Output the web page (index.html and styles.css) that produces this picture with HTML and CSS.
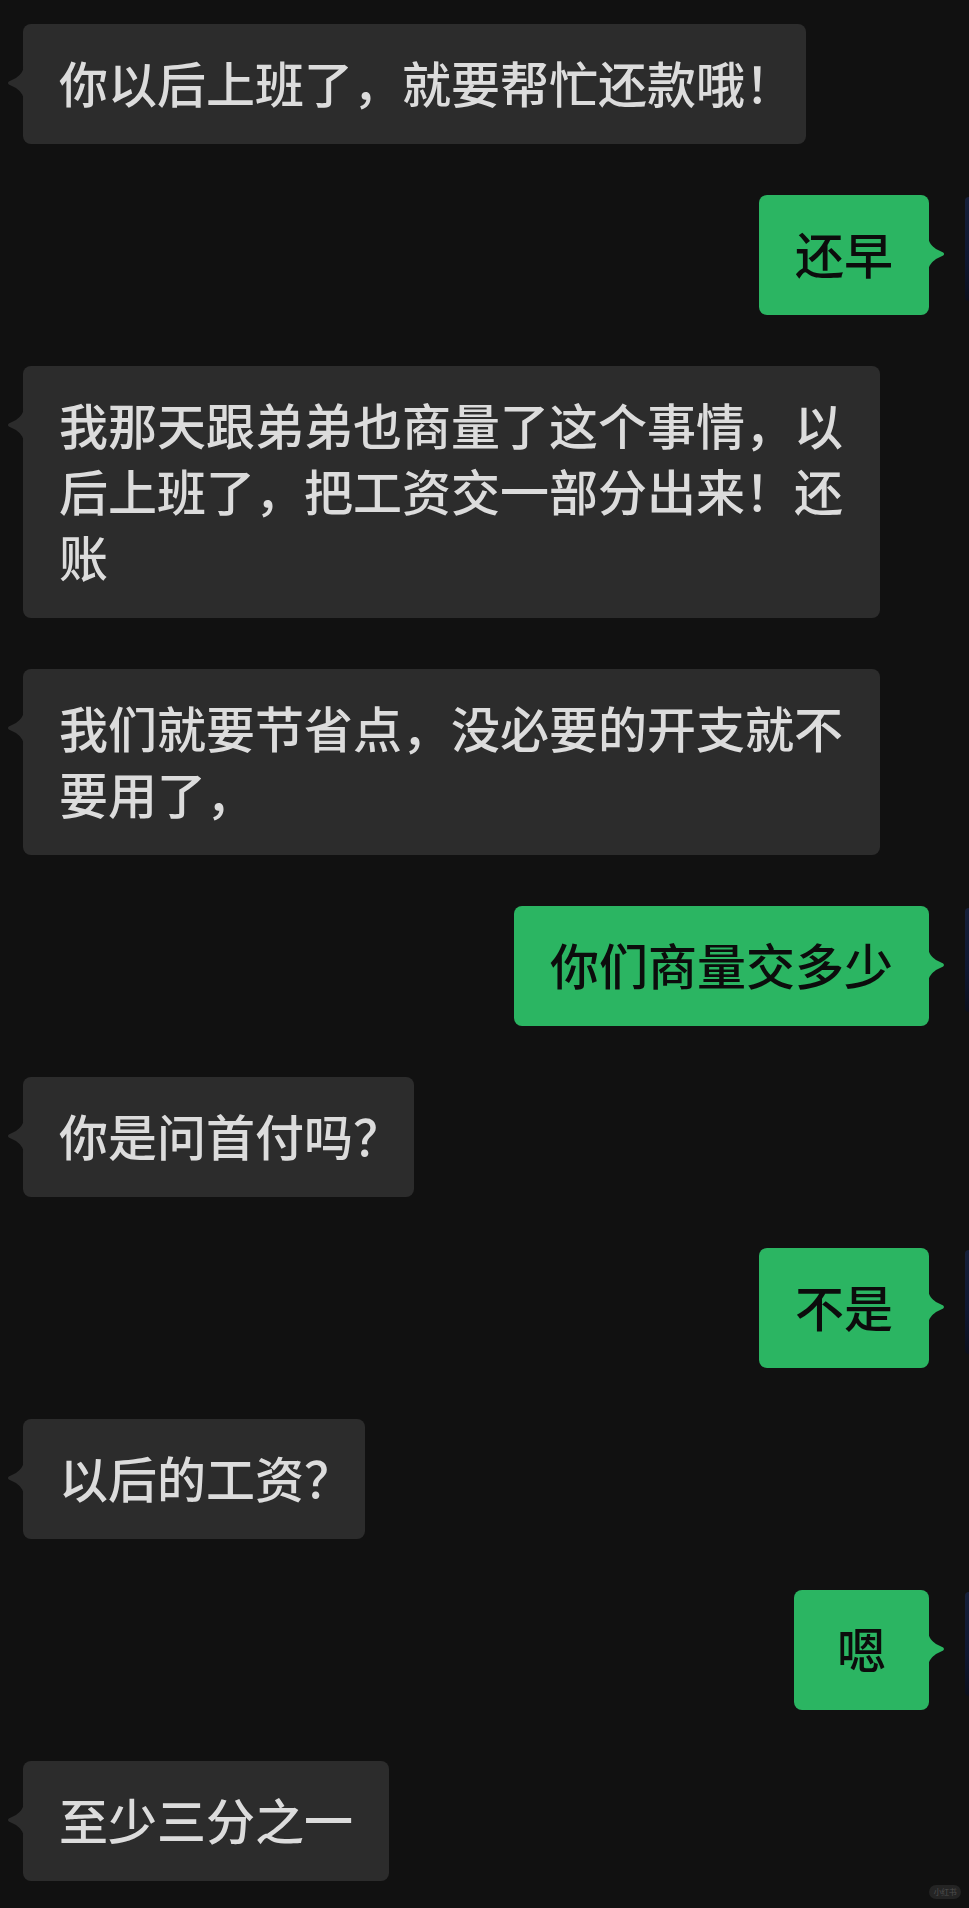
FILE: index.html
```html
<!DOCTYPE html>
<html lang="zh-CN">
<head>
<meta charset="utf-8">
<title>聊天记录</title>
<link rel="stylesheet" href="styles.css">
</head>
<body>
<main class="chat">
  <div class="row left">
    <div class="bubble dark">
      <svg class="tail tail-l" viewBox="0 0 17 34" width="17" height="34"><path d="M17 0 C16 6 13 9 9 12 L1.8 15.6 Q0 17 1.8 18.4 L9 22 C13 25 16 28 17 34 Z"/></svg>
      你以后上班了，就要帮忙还款哦<span class="half">！</span>
    </div>
  </div>
  <div class="row right">
    <div class="bubble green">
      <svg class="tail tail-r" viewBox="0 0 17 34" width="17" height="34"><path d="M0 0 C1 6 4 9 8 12 L15.2 15.6 Q17 17 15.2 18.4 L8 22 C4 25 1 28 0 34 Z"/></svg>
      还早
    </div>
    <div class="avatar"></div>
  </div>
  <div class="row left">
    <div class="bubble dark">
      <svg class="tail tail-l" viewBox="0 0 17 34" width="17" height="34"><path d="M17 0 C16 6 13 9 9 12 L1.8 15.6 Q0 17 1.8 18.4 L9 22 C13 25 16 28 17 34 Z"/></svg>
      我那天跟弟弟也商量了这个事情，以后上班了，把工资交一部分出来！还账
    </div>
  </div>
  <div class="row left">
    <div class="bubble dark">
      <svg class="tail tail-l" viewBox="0 0 17 34" width="17" height="34"><path d="M17 0 C16 6 13 9 9 12 L1.8 15.6 Q0 17 1.8 18.4 L9 22 C13 25 16 28 17 34 Z"/></svg>
      我们就要节省点，没必要的开支就不要用了，
    </div>
  </div>
  <div class="row right">
    <div class="bubble green">
      <svg class="tail tail-r" viewBox="0 0 17 34" width="17" height="34"><path d="M0 0 C1 6 4 9 8 12 L15.2 15.6 Q17 17 15.2 18.4 L8 22 C4 25 1 28 0 34 Z"/></svg>
      你们商量交多少
    </div>
    <div class="avatar"></div>
  </div>
  <div class="row left">
    <div class="bubble dark">
      <svg class="tail tail-l" viewBox="0 0 17 34" width="17" height="34"><path d="M17 0 C16 6 13 9 9 12 L1.8 15.6 Q0 17 1.8 18.4 L9 22 C13 25 16 28 17 34 Z"/></svg>
      你是问首付吗<span class="half">？</span>
    </div>
  </div>
  <div class="row right">
    <div class="bubble green">
      <svg class="tail tail-r" viewBox="0 0 17 34" width="17" height="34"><path d="M0 0 C1 6 4 9 8 12 L15.2 15.6 Q17 17 15.2 18.4 L8 22 C4 25 1 28 0 34 Z"/></svg>
      不是
    </div>
    <div class="avatar"></div>
  </div>
  <div class="row left">
    <div class="bubble dark">
      <svg class="tail tail-l" viewBox="0 0 17 34" width="17" height="34"><path d="M17 0 C16 6 13 9 9 12 L1.8 15.6 Q0 17 1.8 18.4 L9 22 C13 25 16 28 17 34 Z"/></svg>
      以后的工资<span class="half">？</span>
    </div>
  </div>
  <div class="row right">
    <div class="bubble green">
      <svg class="tail tail-r" viewBox="0 0 17 34" width="17" height="34"><path d="M0 0 C1 6 4 9 8 12 L15.2 15.6 Q17 17 15.2 18.4 L8 22 C4 25 1 28 0 34 Z"/></svg>
      嗯
    </div>
    <div class="avatar"></div>
  </div>
  <div class="row left">
    <div class="bubble dark">
      <svg class="tail tail-l" viewBox="0 0 17 34" width="17" height="34"><path d="M17 0 C16 6 13 9 9 12 L1.8 15.6 Q0 17 1.8 18.4 L9 22 C13 25 16 28 17 34 Z"/></svg>
      至少三分之一
    </div>
  </div>
</main>
<div class="watermark">小红书</div>
</body>
</html>
```

FILE: styles.css
```css
html, body {
  margin: 0;
  padding: 0;
  background: #111111;
  overflow: hidden;
}

body {
  width: 969px;
  min-height: 1908px;
  position: relative;
  font-family: "Noto Sans CJK SC", "Noto Sans", sans-serif;
}

.chat {
  display: flex;
  flex-direction: column;
  gap: 51px;
  padding-top: 24px;
}

.row {
  display: flex;
  align-items: flex-start;
}

.row.left {
  justify-content: flex-start;
  padding-left: 23px;
}

.row.right {
  justify-content: flex-end;
}

.bubble {
  position: relative;
  box-sizing: border-box;
  max-width: 857px;
  min-width: 135px;
  padding: 25px 36px 29px 36px;
  border-radius: 8px;
  font-size: 49px;
  line-height: 66px;
  font-weight: 500;
  text-align: left;
}

.bubble.dark {
  background: #2c2c2c;
  color: #dcdcdc;
}

.bubble.green {
  background: #2bb562;
  color: #0c0c0c;
  text-align: center;
}

.half {
  font-feature-settings: "halt" 1;
}

.tail {
  position: absolute;
  top: 42px;
  display: block;
}

.tail-l {
  left: -16px;
  fill: #2c2c2c;
}

.tail-r {
  right: -16px;
  fill: #2bb562;
}

.avatar {
  flex: none;
  width: 4px;
  height: 104px;
  margin-left: 36px;
  margin-top: 2px;
  border-radius: 8px 0 0 8px;
  background: linear-gradient(180deg, #17203a 0%, #0f1730 60%, #0b0f1c 100%);
}

.watermark {
  position: absolute;
  left: 929px;
  top: 1885px;
  width: 32px;
  height: 14px;
  border-radius: 7px;
  background: #242424;
  color: #4e4e4e;
  font-size: 8px;
  line-height: 14px;
  text-align: center;
  letter-spacing: -0.5px;
}
```
